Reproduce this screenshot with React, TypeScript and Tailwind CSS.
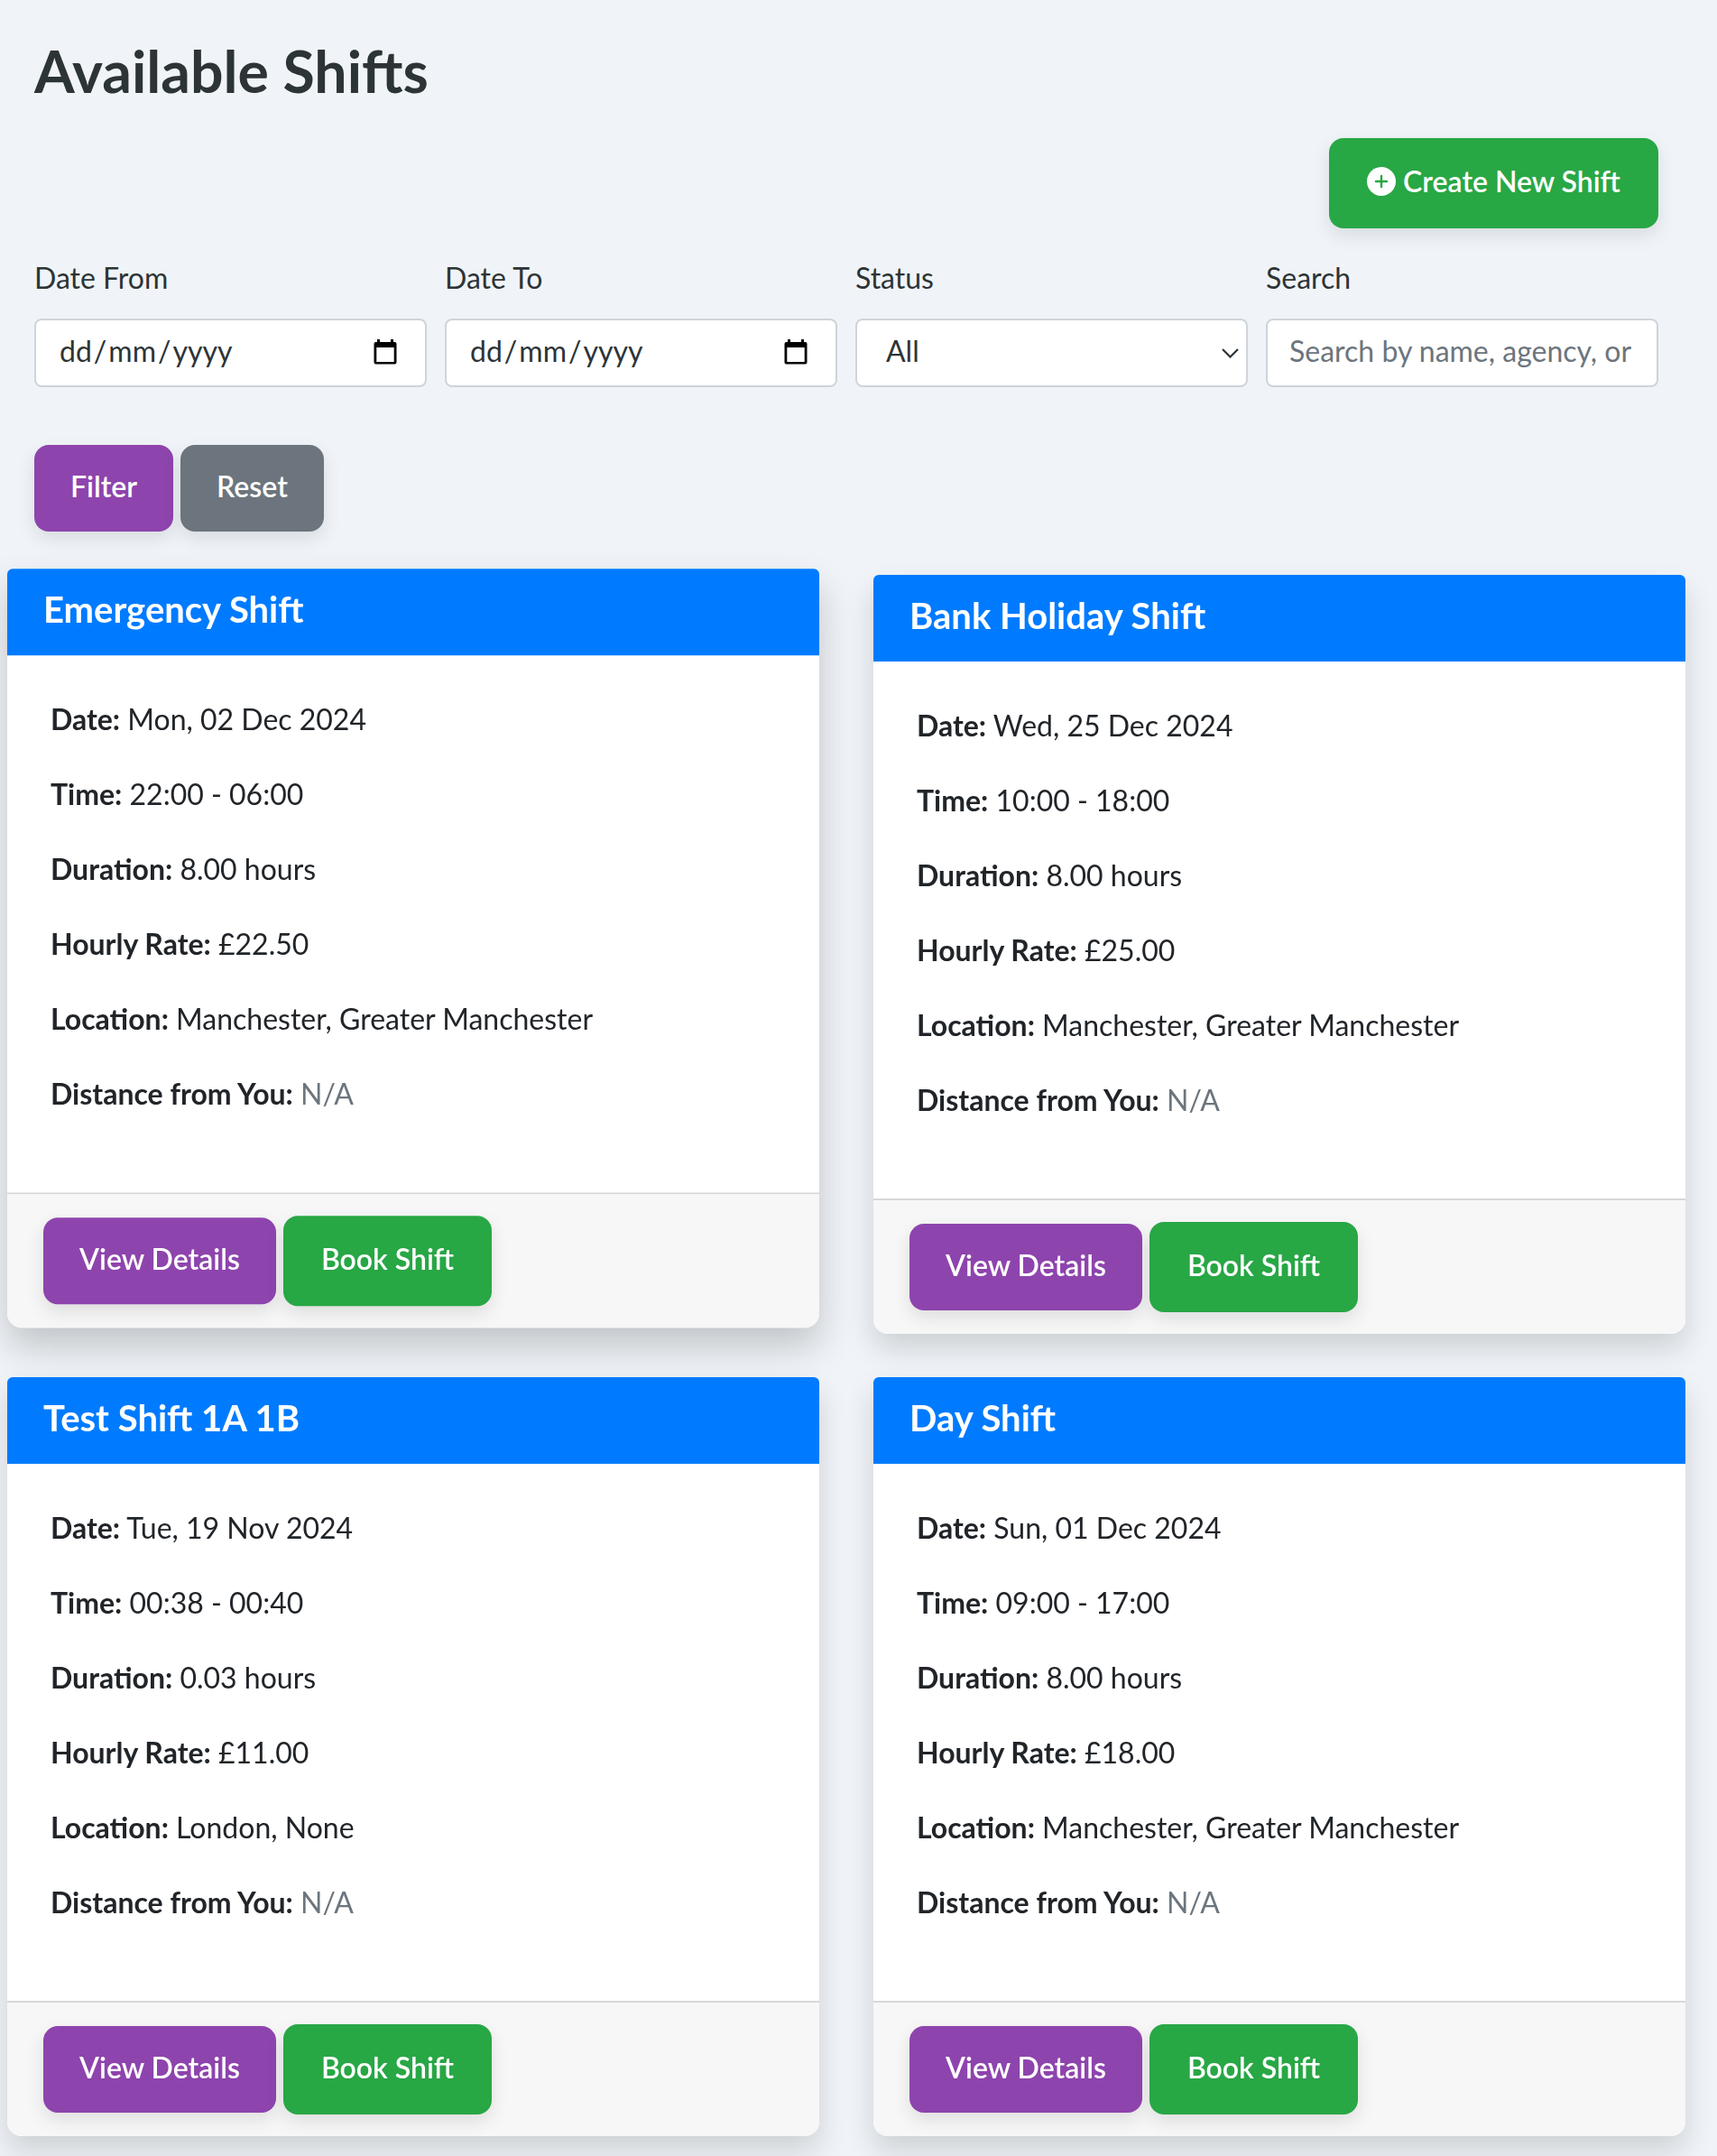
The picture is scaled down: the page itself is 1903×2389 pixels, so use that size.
import React from "react";
import { clsx } from "clsx";

type Shift = {
  name: string;
  date: string;
  time: string;
  duration: string;
  rate: string;
  location: string;
  lifted?: boolean;
};

const shifts: Shift[] = [
  { name: "Emergency Shift", date: "Mon, 02 Dec 2024", time: "22:00 - 06:00", duration: "8.00 hours", rate: "£22.50", location: "Manchester, Greater Manchester", lifted: true },
  { name: "Bank Holiday Shift", date: "Wed, 25 Dec 2024", time: "10:00 - 18:00", duration: "8.00 hours", rate: "£25.00", location: "Manchester, Greater Manchester" },
  { name: "Test Shift 1A 1B", date: "Tue, 19 Nov 2024", time: "00:38 - 00:40", duration: "0.03 hours", rate: "£11.00", location: "London, None" },
  { name: "Day Shift", date: "Sun, 01 Dec 2024", time: "09:00 - 17:00", duration: "8.00 hours", rate: "£18.00", location: "Manchester, Greater Manchester" },
];

const buttonBase =
  "flex items-center justify-center rounded-[16px] pb-1 font-semibold text-white shadow-[0_8px_20px_rgba(0,0,0,0.1)]";

function Button({ className, children }: { className: string; children: React.ReactNode }) {
  return <button className={clsx(buttonBase, className)}>{children}</button>;
}

function Row({ label, children, muted }: { label: string; children: React.ReactNode; muted?: boolean }) {
  return (
    <p className="mb-8 leading-[51px]">
      <strong className="font-bold">{label}:</strong>{" "}
      <span className={muted ? "text-[#6c757d]" : ""}>{children}</span>
    </p>
  );
}

function ShiftCard({ shift }: { shift: Shift }) {
  return (
    <article
      className={clsx(
        "rounded-t-[8px] rounded-b-[16px] bg-white text-[#212529] will-change-transform",
        shift.lifted
          ? "-translate-y-[6.7px] shadow-[0_20px_40px_rgba(0,0,0,0.2)]"
          : "shadow-[0_16px_32px_rgba(0,0,0,0.15)]",
      )}
    >
      <header className="h-24 rounded-t-[6px] bg-[#007bff] px-10 pt-[21px] text-white">
        <h5 className="text-[40px] leading-[48px] font-bold">{shift.name}</h5>
      </header>
      <div className="h-[595.2px] px-12 pt-[45px]">
        <Row label="Date">{shift.date}</Row>
        <Row label="Time">{shift.time}</Row>
        <Row label="Duration">{shift.duration}</Row>
        <Row label="Hourly Rate">{shift.rate}</Row>
        <Row label="Location">{shift.location}</Row>
        <Row label="Distance from You" muted>N/A</Row>
      </div>
      <footer className="flex h-[150px] items-center gap-2 rounded-b-[16px] border-t-2 border-[#d7d7d7] bg-[#f7f7f7] px-10">
        <Button className="h-24 w-[258px] bg-[#8e44ad]">View Details</Button>
        <Button className="h-[100px] w-[231px] bg-[#28a745]">Book Shift</Button>
      </footer>
    </article>
  );
}

function Field({ label, children }: { label: string; children: React.ReactNode }) {
  return (
    <div>
      <div className="mb-5 h-[51px] leading-[51px]">{label}</div>
      <div className="flex h-[76px] items-center rounded-[8px] border-2 border-[#ced4da] bg-white pb-1">{children}</div>
    </div>
  );
}

function DateValue() {
  return (
    <div className="flex w-full items-center justify-between pr-[30px] pl-[26px]">
      <span className="whitespace-nowrap">
        <span>dd</span>
        <span className="px-[2px]">/</span>
        <span>mm</span>
        <span className="px-[2px]">/</span>
        <span>yyyy</span>
      </span>
      <svg className="mt-[2px] h-[28px] w-[28px]" viewBox="0 0 28 28">
        <path
          fillRule="evenodd"
          fill="#000"
          d="M5 0h3v3h12V0h3v3h1.500a2 2 0 0 1 2 2v20.500a2 2 0 0 1-2 2h-21a2 2 0 0 1-2-2V5a2 2 0 0 1 2-2H5zM4.300 9v16h19.400V9z"
        />
      </svg>
    </div>
  );
}

export default function App() {
  return (
    <main className="h-[2389px] w-[1903px] overflow-hidden bg-[#f0f4f8] font-[Lato,sans-serif] text-[32px] text-[#2d3436]">
      <section className="pr-[65px] pl-[38px]">
        <h1 className="h-[153px] pt-10 text-[64.4px] leading-[77px] font-bold">Available Shifts</h1>
        <div className="flex justify-end">
          <Button className="h-[100px] w-[365px] gap-2 bg-[#28a745]">
            <svg className="h-8 w-8 shrink-0" viewBox="0 0 32 32">
              <circle cx="16" cy="16" r="16" fill="#fff" />
              <path d="M16 10v12M10 16h12" stroke="#28a745" strokeWidth="2.400" strokeLinecap="round" />
            </svg>
            Create New Shift
          </Button>
        </div>
        <div className="mt-[29px] grid grid-cols-4 gap-5">
          <Field label="Date From"><DateValue /></Field>
          <Field label="Date To"><DateValue /></Field>
          <Field label="Status">
            <div className="flex w-full items-center justify-between pr-2 pl-8">
              <span>All</span>
              <svg className="mt-1 h-[11px] w-[19px]" viewBox="0 0 19 11" fill="none">
                <path d="M1 1l8.500 8.500L18 1" stroke="#2d3436" strokeWidth="2.200" />
              </svg>
            </div>
          </Field>
          <Field label="Search">
            <span className="mx-6 overflow-hidden whitespace-nowrap text-[#6c757d]">Search by name, agency, or</span>
          </Field>
        </div>
        <div className="mt-16 flex gap-2">
          <Button className="h-24 w-[154px] bg-[#8e44ad]">Filter</Button>
          <Button className="h-24 w-[159px] bg-[#6c757d]">Reset</Button>
        </div>
      </section>
      <section className="mt-12 grid grid-cols-[900px_900px] gap-x-[60px] gap-y-12 pl-2">
        {shifts.map((shift) => (
          <ShiftCard key={shift.name} shift={shift} />
        ))}
      </section>
    </main>
  );
}
